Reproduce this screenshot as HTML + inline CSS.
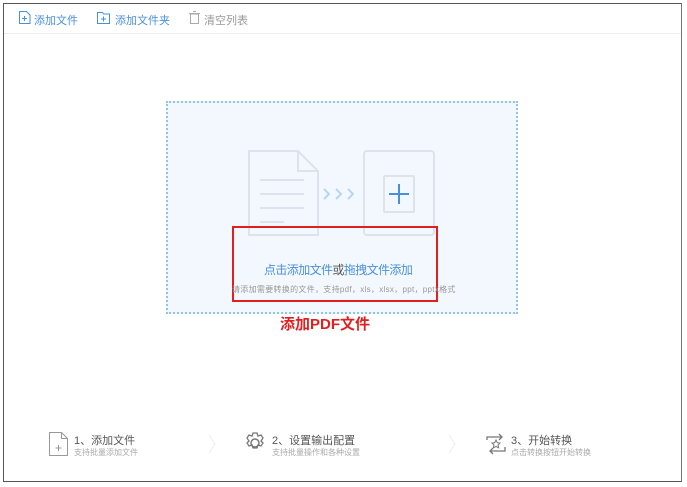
<!DOCTYPE html>
<html><head><meta charset="utf-8"><style>
body{margin:0;width:687px;height:487px;background:#fff;position:relative;overflow:hidden;font-family:"Liberation Sans","Noto Sans CJK SC",sans-serif}
.abs{position:absolute}
.frame{left:3px;top:3px;width:679px;height:479px;border:1px solid #555;border-right-color:#777;box-sizing:border-box}
.tb{font-size:11px;color:#4a90d9;top:12px}
.t{font-size:11px;white-space:nowrap}
</style></head><body>
<div class="abs frame"></div>
<div class="abs" style="left:4px;top:33px;width:677px;height:1px;background:#eee"></div>
<svg class="abs" style="left:18px;top:10px" width="14" height="15"><path d="M1.5 1.5h7l3.5 3.5v8.5h-10.5z" fill="none" stroke="#4a90d9"/><path d="M6.5 6v5M4 8.5h5" stroke="#4a90d9"/></svg>
<div class="abs tb" style="left:34px">添加文件</div>
<svg class="abs" style="left:96px;top:10px" width="15" height="15"><path d="M1.5 2.5h5l1 1.5h6v9.5h-12z" fill="none" stroke="#4a90d9"/><path d="M7.5 6.5v5M5 9h5" stroke="#4a90d9"/></svg>
<div class="abs tb" style="left:115px">添加文件夹</div>
<svg class="abs" style="left:188px;top:10px" width="13" height="15"><path d="M2.5 4h8v9.5h-8zM1 3.5h11M5 1.5h3" fill="none" stroke="#aaa"/></svg>
<div class="abs tb" style="left:204px;color:#999">清空列表</div>

<div class="abs" style="left:166px;top:101px;width:352px;height:213px;border:2px dotted #8ec3f3;background:#f3f8fe;box-sizing:border-box"></div>
<svg class="abs" style="left:246px;top:148px" width="192" height="92">
<path d="M3 3h49l20 20v64h-69z" fill="none" stroke="#dde3ec" stroke-width="2"/>
<path d="M52 3v20h20" fill="none" stroke="#dde3ec" stroke-width="2"/>
<path d="M14 32h44M14 46h44M14 60h44M14 74h24" stroke="#dde3ec" stroke-width="2"/>
<path d="M78 41l5 5-5 5M90 41l5 5-5 5M102 41l5 5-5 5" fill="none" stroke="#b7d5f5" stroke-width="2"/>
<rect x="118" y="3" width="70" height="84" rx="3" fill="none" stroke="#dde3ec" stroke-width="2"/>
<rect x="138" y="28" width="30" height="36" rx="1" fill="none" stroke="#dde3ec" stroke-width="2"/>
<path d="M153 36v20M143 46h20" stroke="#4a90d9" stroke-width="2"/>
</svg>
<div class="abs" style="left:232px;top:226px;width:206px;height:76px;border:2px solid #e02020;box-sizing:border-box"></div>
<div class="abs t" style="left:264px;top:261px;font-size:12px;letter-spacing:-0.6px;color:#4a90d9">点击添加文件<span style="color:#555">或</span>拖拽文件添加</div>
<div class="abs t" style="left:232px;top:284px;font-size:8px;letter-spacing:0.3px;color:#999">请添加需要转换的文件，支持pdf，xls，xlsx，ppt，pptx格式</div>
<div class="abs t" style="left:280px;top:313px;font-size:15px;font-weight:bold;color:#e02020">添加PDF文件</div>

<svg class="abs" style="left:48px;top:431px" width="22" height="26"><path d="M1.5 1.5h12l6 6v17h-18z" fill="none" stroke="#999"/><path d="M13.5 1.5v6h6M10.5 14v6M7.5 17h6" fill="none" stroke="#999"/></svg>
<div class="abs t" style="left:74px;top:432px;color:#555">1、添加文件</div>
<div class="abs t" style="left:74px;top:447px;font-size:8px;color:#aaa">支持批量添加文件</div>
<svg class="abs" style="left:207px;top:433px" width="10" height="22"><path d="M2 2l6 9-6 9" fill="none" stroke="#eee"/></svg>
<svg class="abs" style="left:243px;top:431px" width="24" height="24"><circle cx="12" cy="12" r="4" fill="none" stroke="#777" stroke-width="1.5"/><path d="M10 2h4l1 3 3-1 2 3-2 3 2 2-2 3-3-1-1 3h-4l-1-3-3 1-2-3 2-2-2-3 2-3 3 1z" fill="none" stroke="#777" stroke-width="1.3"/></svg>
<div class="abs t" style="left:272px;top:432px;color:#555">2、设置输出配置</div>
<div class="abs t" style="left:272px;top:447px;font-size:8px;color:#aaa">支持批量操作和各种设置</div>
<svg class="abs" style="left:447px;top:433px" width="10" height="22"><path d="M2 2l6 9-6 9" fill="none" stroke="#eee"/></svg>
<svg class="abs" style="left:484px;top:431px" width="24" height="26"><path d="M3 9v-3h15M15 3l3 3-3 3M21 16v4h-15M9 23l-3-3 3-3" fill="none" stroke="#777" stroke-width="1.3"/><path d="M12 9l1.3 2.7 2.7.3-2 2 .6 2.8-2.6-1.4-2.6 1.4.6-2.8-2-2 2.7-.3z" fill="none" stroke="#777"/></svg>
<div class="abs t" style="left:511px;top:432px;color:#555">3、开始转换</div>
<div class="abs t" style="left:511px;top:447px;font-size:8px;color:#aaa">点击转换按钮开始转换</div>
</body></html>
